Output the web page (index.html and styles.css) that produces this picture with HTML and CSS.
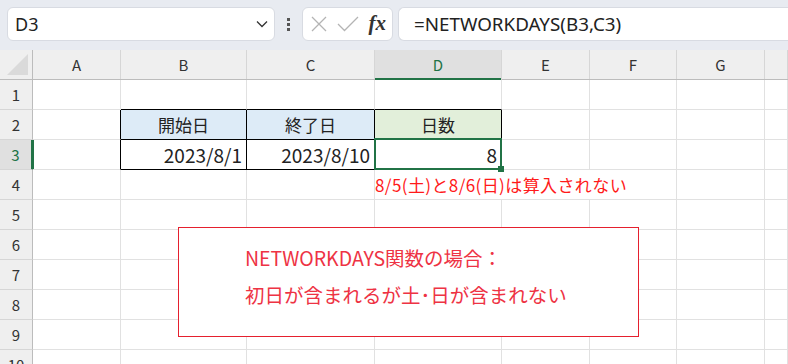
FILE: index.html
```html
<!DOCTYPE html>
<html lang="ja">
<head>
    <meta charset="UTF-8">
    <title>NETWORKDAYS</title>
    <link rel="stylesheet" href="styles.css">
</head>
<body>
    <div class="toolbar">
        <div class="name-box">
            <span class="name-text">D3</span>
            <svg class="chevron" width="12" height="8" viewBox="0 0 12 8">
                <path d="M1 1.5 L6 6.5 L11 1.5" fill="none" stroke="#333" stroke-width="1.3"/>
            </svg>
        </div>
        <div class="dots"><i></i><i></i><i></i></div>
        <div class="fx-box">
            <svg width="18" height="18" viewBox="0 0 18 18">
                <path d="M2 2 L16 16 M16 2 L2 16" stroke="#b4b4b4" stroke-width="1.3" fill="none"/>
            </svg>
            <svg width="22" height="18" viewBox="0 0 22 18">
                <path d="M1 9 L7.5 15.5 L21 2" stroke="#b4b4b4" stroke-width="1.3" fill="none"/>
            </svg>
            <span class="fx">fx</span>
        </div>
        <div class="formula-box">=NETWORKDAYS(B3,C3)</div>
    </div>

    <div class="sheet">
        <div class="row head">
            <div class="corner"><span></span></div>
            <div class="ch">A</div><div class="ch">B</div><div class="ch">C</div>
            <div class="ch sel">D</div><div class="ch">E</div><div class="ch">F</div>
            <div class="ch">G</div><div class="ch"></div>
        </div>
        <div class="row">
            <div class="rh">1</div>
            <div class="c"></div><div class="c bb"></div><div class="c bb"></div><div class="c bb"></div>
            <div class="c"></div><div class="c"></div><div class="c"></div><div class="c"></div>
        </div>
        <div class="row">
            <div class="rh">2</div>
            <div class="c br"></div>
            <div class="c tb blue center">開始日</div>
            <div class="c tb blue center">終了日</div>
            <div class="c tb green center">日数</div>
            <div class="c"></div><div class="c"></div><div class="c"></div><div class="c"></div>
        </div>
        <div class="row">
            <div class="rh sel">3</div>
            <div class="c br"></div>
            <div class="c tb num">2023/8/1</div>
            <div class="c tb num">2023/8/10</div>
            <div class="c tb num active">8<span class="handle"></span></div>
            <div class="c"></div><div class="c"></div><div class="c"></div><div class="c"></div>
        </div>
        <div class="row">
            <div class="rh">4</div>
            <div class="c"></div><div class="c"></div><div class="c"></div>
            <div class="c note">8/5(土)と8/6(日)は算入されない</div>
            <div class="c"></div><div class="c"></div>
        </div>
        <div class="row">
            <div class="rh">5</div>
            <div class="c"></div><div class="c"></div><div class="c"></div><div class="c"></div>
            <div class="c"></div><div class="c"></div><div class="c"></div><div class="c"></div>
        </div>
        <div class="row">
            <div class="rh">6</div>
            <div class="c"></div><div class="c"></div><div class="c"></div><div class="c"></div>
            <div class="c"></div><div class="c"></div><div class="c"></div><div class="c"></div>
        </div>
        <div class="row">
            <div class="rh">7</div>
            <div class="c"></div><div class="c"></div><div class="c"></div><div class="c"></div>
            <div class="c"></div><div class="c"></div><div class="c"></div><div class="c"></div>
        </div>
        <div class="row">
            <div class="rh">8</div>
            <div class="c"></div><div class="c"></div><div class="c"></div><div class="c"></div>
            <div class="c"></div><div class="c"></div><div class="c"></div><div class="c"></div>
        </div>
        <div class="row">
            <div class="rh">9</div>
            <div class="c"></div><div class="c"></div><div class="c"></div><div class="c"></div>
            <div class="c"></div><div class="c"></div><div class="c"></div><div class="c"></div>
        </div>
        <div class="row">
            <div class="rh">10</div>
            <div class="c"></div><div class="c"></div><div class="c"></div><div class="c"></div>
            <div class="c"></div><div class="c"></div><div class="c"></div><div class="c"></div>
        </div>

        <!-- floating text box -->
        <div class="callout">
            <p>NETWORKDAYS関数の場合：</p>
            <p>初日が含まれるが土･日が含まれない</p>
        </div>
    </div>
</body>
</html>
```

FILE: styles.css
```css
body {
    margin: 0;
    width: 788px;
    height: 364px;
    overflow: hidden;
    background: #fff;
    font-family: "Noto Sans CJK JP", sans-serif;
    color: #222;
}

/* formula bar */
.toolbar {
    height: 50px;
    background-color: #e8ebf1;
    display: flex;
    align-items: center;
    padding: 0 0 2px 7px;
    box-sizing: border-box;
}

.name-box,
.fx-box,
.formula-box {
    height: 34px;
    background-color: #fff;
    border: 1px solid #d8dbe2;
    border-radius: 6px;
    box-sizing: border-box;
    display: flex;
    align-items: center;
}

.name-box {
    width: 268px;
    padding: 0 6px 0 7px;
    justify-content: space-between;
}

.name-text {
    font-family: "Noto Sans", sans-serif;
    font-size: 18px;
    color: #222;
}

.dots {
    width: 27px;
    display: flex;
    flex-direction: column;
    align-items: center;
    gap: 2px;
}

.dots i {
    width: 3px;
    height: 3px;
    background-color: #555;
}

.fx-box {
    width: 91px;
    padding: 0 6px 0 7px;
    justify-content: space-between;
}

.fx {
    font-family: "Liberation Serif", serif;
    font-style: italic;
    font-weight: bold;
    font-size: 21px;
    color: #333;
    margin-top: -2px;
}

.formula-box {
    margin-left: 5px;
    flex: 1;
    border-radius: 6px 0 0 6px;
    border-right: none;
    padding-left: 15px;
    font-family: "Noto Sans", sans-serif;
    font-size: 18.8px;
    color: #222;
}

/* grid */
.sheet {
    position: relative;
}

.row {
    display: grid;
    grid-template-columns: 33px 88px 126px 128px 127px 88px 87px 88px 1fr;
    height: 30px;
}

.row.head {
    height: 29px;
    background-color: #efefef;
    border-bottom: 1px solid #bcbcbc;
}

.corner {
    position: relative;
    border-right: 1px solid #bcbcbc;
}

.corner span {
    position: absolute;
    right: 4px;
    bottom: 4px;
    width: 0;
    height: 0;
    border-left: 21px solid transparent;
    border-bottom: 21px solid #dadada;
}

.ch {
    border-right: 1px solid #d6d6d6;
    text-align: center;
    font-size: 15px;
    line-height: 29px;
    color: #333;
}

.ch.sel {
    background-color: #e0e0e0;
    color: #217346;
    box-shadow: inset 0 -2px 0 #217346;
    margin-bottom: -1px;
}

.rh {
    background-color: #efefef;
    border-right: 1px solid #bcbcbc;
    border-bottom: 1px solid #d6d6d6;
    text-align: center;
    font-size: 15px;
    line-height: 29px;
    color: #333;
}

.rh.sel {
    background-color: #e0e0e0;
    color: #217346;
    border-right: 3px solid #217346;
    margin-right: -1px;
}

.c {
    border-right: 1px solid #e1e1e1;
    border-bottom: 1px solid #e1e1e1;
    font-size: 17px;
    line-height: 29px;
    padding: 0 4px;
    white-space: nowrap;
}

.c.bb {
    border-bottom-color: #000;
}

.c.br {
    border-right-color: #000;
}

.c.tb {
    border-right-color: #000;
    border-bottom-color: #000;
}

.blue {
    background-color: #ddebf7;
}

.green {
    background-color: #e2efda;
}

.center {
    text-align: center;
}

.num {
    text-align: right;
    font-size: 19px;
}

.active {
    position: relative;
}

.active::after {
    content: "";
    position: absolute;
    top: -2px;
    left: -1px;
    right: -1px;
    bottom: -1px;
    border: 2px solid #217346;
}

.handle {
    position: absolute;
    right: -3px;
    bottom: -3px;
    width: 6px;
    height: 6px;
    background-color: #217346;
    z-index: 1;
}

.note {
    grid-column: span 3;
    color: #ff1a1a;
    font-size: 17px;
    letter-spacing: 0.4px;
    padding-left: 0;
}

/* text box shape */
.callout {
    position: absolute;
    left: 178px;
    top: 177px;
    width: 461px;
    height: 110px;
    box-sizing: border-box;
    border: 1px solid #e5202e;
    background-color: #fff;
    padding: 11px 0 0 66px;
    color: #ee3344;
    font-size: 19.5px;
}

.callout p {
    margin: 0;
    line-height: 37px;
}
```
